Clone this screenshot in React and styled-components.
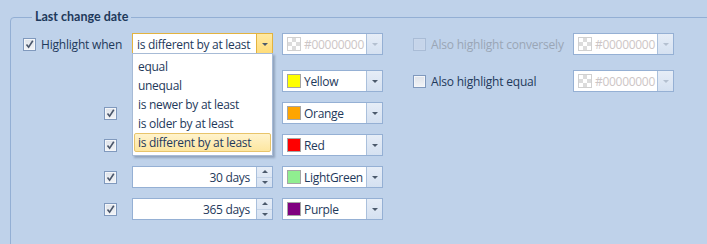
import React from 'react';
import styled, { createGlobalStyle } from 'styled-components';

const GlobalStyle = createGlobalStyle`
  html, body {
    margin: 0;
    padding: 0;
    background: #bfd2ea;
  }
  body {
    font-family: "Open Sans", "Noto Sans", sans-serif;
    font-size: 12px;
    color: #1e395b;
  }
`

const Page = styled.div`
  width: 707px;
  height: 244px;
  overflow: hidden;
  position: relative;
  background: #bfd2ea;
`

const Group = styled.fieldset`
  margin: 0;
  position: absolute;
  left: 10px;
  top: 10px;
  width: 760px;
  height: 300px;
  border: 1px solid #93afd4;
  border-radius: 4px 0 0 0;
  padding: 9px 0 0 12px;
  box-sizing: border-box;
`

const Legend = styled.legend`
  font-family: Lato, "Open Sans", sans-serif;
  font-weight: 700;
  font-size: 12.5px;
  padding: 0 3px;
  margin-left: 9px;
  line-height: 14px;
  color: #1e395b;
`

const Rows = styled.div`
  display: flex;
  flex-direction: column;
`

const Row = styled.div`
  display: flex;
  align-items: center;
  height: 22px;
  margin-bottom: ${p => p.$gap}px;
`

const LeadCell = styled.div`
  width: 109px;
  display: flex;
  align-items: center;
  justify-content: ${p => p.$end ? 'flex-end' : 'flex-start'};
  padding-right: ${p => p.$end ? '15px' : '0'};
  box-sizing: border-box;
  gap: 5px;
`

const MainCell = styled.div`
  width: 140px;
  position: relative;
`

const SideCell = styled.div`
  width: 160px;
  margin-left: 30px;
  display: flex;
  align-items: center;
  gap: 5px;
`

const Label = styled.span`
  color: ${p => p.$disabled ? '#9aa6b6' : '#1e395b'};
  white-space: nowrap;
  letter-spacing: -0.2px;
`

const Box = styled.div`
  box-sizing: border-box;
  height: 22px;
  width: ${p => p.$w}px;
  margin-left: ${p => p.$ml || 0}px;
  background: #fff;
  border: 1px solid ${p => p.$hot ? '#e3b33f' : '#95b0d4'};
  display: flex;
  align-items: stretch;
  position: relative;
`

const BoxText = styled.div`
  flex: 1;
  display: flex;
  align-items: center;
  justify-content: ${p => p.$right ? 'flex-end' : 'flex-start'};
  padding: 0 ${p => p.$right ? '6px' : '4px'};
  gap: 3px;
  color: ${p => p.$disabled ? '#cdc6c6' : '#1e395b'};
  white-space: nowrap;
  overflow: hidden;
  letter-spacing: -0.3px;
`

const DropButton = styled.div`
  width: 15px;
  border-left: 1px solid ${p => p.$hot ? '#e3b33f' : '#aac0dc'};
  background: ${p => p.$hot
    ? 'linear-gradient(#ffe9a2, #ffdc78)'
    : 'linear-gradient(#e6edf7, #d5e1f1)'};
  display: flex;
  align-items: center;
  justify-content: center;
`

const Arrow = styled.div`
  width: 0;
  height: 0;
  border-left: 3px solid transparent;
  border-right: 3px solid transparent;
  border-top: 3px solid ${p => p.$disabled ? '#b4c0d0' : '#4c5a6c'};
  ${p => p.$up && 'border-top: 0; border-bottom: 3px solid #4c5a6c;'}
`

const Spin = styled.div`
  width: 15px;
  border-left: 1px solid #aac0dc;
  background: linear-gradient(#e6edf7, #d5e1f1);
  display: flex;
  flex-direction: column;
`

const SpinHalf = styled.div`
  flex: 1;
  display: flex;
  align-items: center;
  justify-content: center;
  & + & {
    border-top: 1px solid #c4d3e7;
  }
`

const Swatch = styled.div`
  width: 12px;
  height: 12px;
  border: 1px solid #a5a5a5;
  background: ${p => p.$color};
  flex-shrink: 0;
`

const Checker = styled(Swatch)`
  border-color: #d0d0d0;
  background-color: #fff;
  background-image:
    linear-gradient(45deg, #dcdcdc 25%, transparent 25%, transparent 75%, #dcdcdc 75%),
    linear-gradient(45deg, #dcdcdc 25%, transparent 25%, transparent 75%, #dcdcdc 75%);
  background-size: 8px 8px;
  background-position: 0 0, 4px 4px;
`

const CheckBoxFrame = styled.div`
  width: 11px;
  height: 11px;
  border: 1px solid ${p => p.$disabled ? '#a9bcd6' : '#8099bd'};
  background: ${p => p.$disabled ? '#c6d5ea' : 'linear-gradient(#dee3ea, #f2f4f7)'};
  box-shadow: inset 0 0 0 1px ${p => p.$disabled ? '#c9d7eb' : '#f4f6f9'};
  display: flex;
  align-items: center;
  justify-content: center;
  flex-shrink: 0;
`

const DropList = styled.div`
  position: absolute;
  left: 0;
  top: 20px;
  width: 141px;
  box-sizing: border-box;
  background: #fff;
  border: 1px solid #a7bbd6;
  padding: 3px 1px;
  box-shadow: 2px 2px 2px rgba(60, 80, 110, 0.35);
  z-index: 5;
`

const Item = styled.div`
  height: 19px;
  box-sizing: border-box;
  display: flex;
  align-items: center;
  padding-left: 3px;
  border: 1px solid ${p => p.$active ? '#e8c46a' : 'transparent'};
  border-radius: 2px;
  background: ${p => p.$active ? 'linear-gradient(#fff3cc, #fde6a0)' : 'transparent'};
  letter-spacing: -0.3px;
  white-space: nowrap;
`

function CheckBox({ checked, disabled }) {
  return (
    <CheckBoxFrame $disabled={disabled}>
      {checked && (
        <svg width="9" height="9" viewBox="0 0 9 9">
          <path d="M1.5 4.6 L3.6 7.2 L7.8 0.8" fill="none" stroke="#4a566a" strokeWidth="1.6" />
        </svg>
      )}
    </CheckBoxFrame>
  );
}

function ColorCombo({ color, name, ml }) {
  const disabled = !color;
  return (
    <Box $w={101} $ml={ml}>
      <BoxText $disabled={disabled}>
        {disabled ? <Checker /> : <Swatch $color={color} />}
        <span>{disabled ? '#00000000' : name}</span>
      </BoxText>
      <DropButton><Arrow $disabled={disabled} /></DropButton>
    </Box>
  );
}

function SpinBox({ value }) {
  return (
    <Box $w={141}>
      <BoxText $right>{value}</BoxText>
      <Spin>
        <SpinHalf><Arrow $up /></SpinHalf>
        <SpinHalf><Arrow /></SpinHalf>
      </Spin>
    </Box>
  );
}

const options = [
  'equal',
  'unequal',
  'is newer by at least',
  'is older by at least',
  'is different by at least',
];

// the first two spin boxes sit under the open list, so their values aren't shown
const steps = [
  { days: '', color: '#ffa500', name: 'Orange', gap: 10 },
  { days: '', color: '#ff0000', name: 'Red', gap: 10 },
  { days: '30 days', color: '#90ee90', name: 'LightGreen', gap: 10 },
  { days: '365 days', color: '#800080', name: 'Purple', gap: 0 },
];

export default function App() {
  return (
    <>
      <GlobalStyle />
      <Page>
        <Group>
          <Legend>Last change date</Legend>
          <Rows>
            <Row $gap={15}>
              <LeadCell>
                <CheckBox checked />
                <Label>Highlight when</Label>
              </LeadCell>
              <MainCell>
                <Box $w={141} $hot>
                  <BoxText>is different by at least</BoxText>
                  <DropButton $hot><Arrow /></DropButton>
                </Box>
                <DropList>
                  {options.map(o => (
                    <Item key={o} $active={o === 'is different by at least'}>{o}</Item>
                  ))}
                </DropList>
              </MainCell>
              <ColorCombo ml={10} />
              <SideCell>
                <CheckBox disabled />
                <Label $disabled>Also highlight conversely</Label>
              </SideCell>
              <ColorCombo />
            </Row>
            <Row $gap={10}>
              <LeadCell />
              <MainCell />
              <ColorCombo ml={10} color="#ffff00" name="Yellow" />
              <SideCell>
                <CheckBox />
                <Label>Also highlight equal</Label>
              </SideCell>
              <ColorCombo />
            </Row>
            {steps.map(s => (
              <Row key={s.name} $gap={s.gap}>
                <LeadCell $end>
                  <CheckBox checked />
                </LeadCell>
                <MainCell>
                  <SpinBox value={s.days} />
                </MainCell>
                <ColorCombo ml={10} color={s.color} name={s.name} />
              </Row>
            ))}
          </Rows>
        </Group>
      </Page>
    </>
  );
}
